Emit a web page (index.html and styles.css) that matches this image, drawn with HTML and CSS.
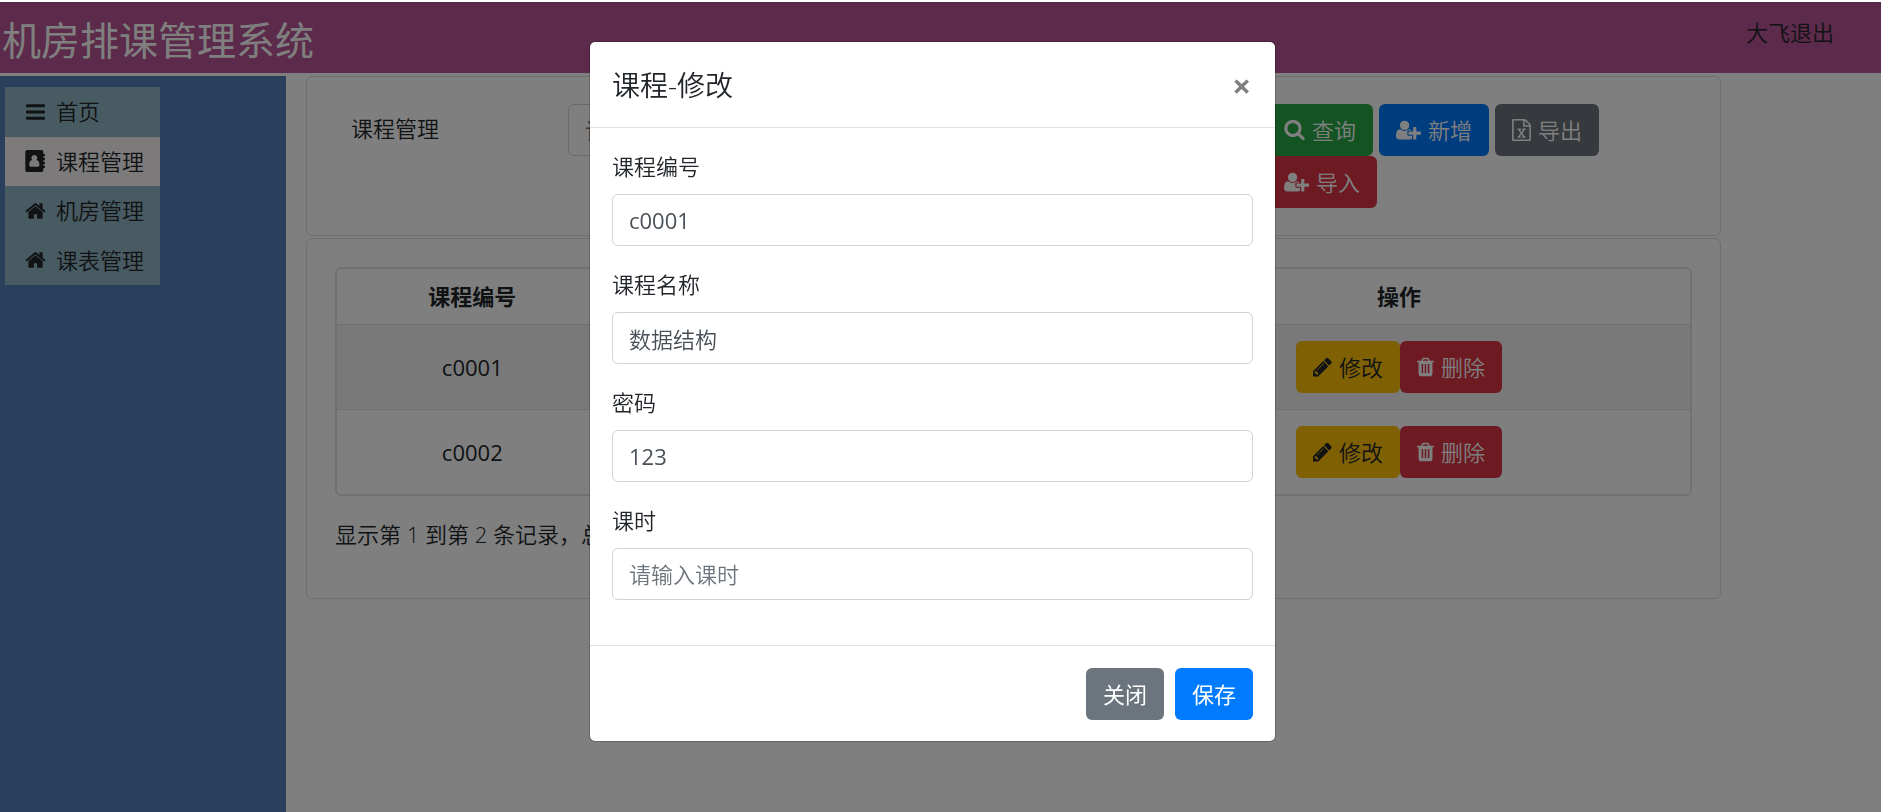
FILE: index.html
```
<!DOCTYPE html>
<html lang="zh-CN">
  <head>
    <meta charset="UTF-8" />
    <meta name="viewport" content="width=device-width, initial-scale=1.0" />
    <title>机房排课管理系统</title>
    <link rel="stylesheet" href="styles.css">
  </head>
  <body>
    <!-- 图标 -->
    <svg class="sprite" aria-hidden="true">
      <symbol id="i-bars" viewBox="96 0 1600 1792">
        <path d="M1664 1344v128q0 26-19 45t-45 19h-1408q-26 0-45-19t-19-45v-128q0-26 19-45t45-19h1408q26 0 45 19t19 45zm0-512v128q0 26-19 45t-45 19h-1408q-26 0-45-19t-19-45v-128q0-26 19-45t45-19h1408q26 0 45 19t19 45zm0-512v128q0 26-19 45t-45 19h-1408q-26 0-45-19t-19-45v-128q0-26 19-45t45-19h1408q26 0 45 19t19 45z" />
      </symbol>
      <symbol id="i-book" viewBox="64 0 1664 1792">
        <path fill-rule="evenodd" d="M224 0h1152q66 0 113 47t47 113v160h96q32 0 32 32v128q0 32-32 32h-96v128h96q32 0 32 32v128q0 32-32 32h-96v128h96q32 0 32 32v128q0 32-32 32h-96v128h96q32 0 32 32v128q0 32-32 32h-96v160q0 66-47 113t-113 47h-1152q-66 0-113-47t-47-113v-1472q0-66 47-113t113-47zM800 400a240 240 0 0 0-170 410q-250 50-250 420q0 130 120 130h600q120 0 120-130q0-370-250-420a240 240 0 0 0-170-410z" />
      </symbol>
      <symbol id="i-home" viewBox="64 0 1664 1792">
        <path d="M1472 992v480q0 26-19 45t-45 19h-384v-384h-256v384h-384q-26 0-45-19t-19-45v-480q0-1 .5-3t.5-3l575-474 575 474q1 2 1 6zm223-69l-62 74q-8 9-21 11h-3q-13 0-21-7l-692-577-692 577q-12 8-24 7-13-2-21-11l-62-74q-8-10-7-23.5t11-21.5l719-599q32-26 76-26t76 26l244 204v-195q0-14 9-23t23-9h192q14 0 23 9t9 23v408l219 182q10 8 11 21.5t-7 23.5z" />
      </symbol>
      <symbol id="i-search" viewBox="64 64 1664 1792">
        <path d="M1216 832q0-185-131.500-316.500t-316.500-131.500-316.500 131.500-131.500 316.500 131.500 316.500 316.500 131.500 316.500-131.500 131.500-316.500zm512 832q0 52-38 90t-90 38q-54 0-90-38l-343-342q-179 124-399 124-143 0-273.500-55.500t-225-150-150-225-55.500-273.500 55.500-273.500 150-225 225-150 273.500-55.500 273.500 55.500 225 150 150 225 55.500 273.500q0 220-124 399l343 343q37 37 37 90z" />
      </symbol>
      <symbol id="i-user-plus" viewBox="0 0 2048 1792">
        <path d="M704 896q-159 0-271.500-112.500t-112.500-271.500 112.500-271.500 271.500-112.500 271.500 112.500 112.500 271.500-112.500 271.500-271.500 112.500zm960 128h352q13 0 22.500 9.500t9.500 22.500v192q0 13-9.500 22.500t-22.500 9.500h-352v352q0 13-9.500 22.500t-22.500 9.500h-192q-13 0-22.500-9.500t-9.500-22.500v-352h-352q-13 0-22.500-9.500t-9.500-22.500v-192q0-13 9.500-22.500t22.500-9.500h352v-352q0-13 9.500-22.500t22.500-9.500h192q13 0 22.500 9.500t9.500 22.500v352zm-736 224q0 52 38 90t90 38h256v238q-68 50-171 50h-874q-121 0-194-69t-73-190q0-53 3.500-103.500t14-109 26.500-108.500 43-97.500 62-81 85.500-53.500 111.500-20q19 0 39 17 79 61 154.500 91.500t164.500 30.500 164.500-30.500 154.500-91.500q20-17 39-17 132 0 217 96h-223q-52 0-90 38t-38 90v192z" />
      </symbol>
      <symbol id="i-excel" viewBox="128 0 1536 1792">
        <path d="M1596 380q28 28 48 76t20 88v1152q0 40-28 68t-68 28h-1344q-40 0-68-28t-28-68v-1600q0-40 28-68t68-28h896q40 0 88 20t76 48zm-444-244v376h376q-10-29-22-41l-313-313q-12-12-41-22zm384 1528v-1024h-416q-40 0-68-28t-28-68v-416h-768v1536h1280zm-979-234v106h281v-106h-75l103-161q5-7 10-16.500t7.500-13.500 3.500-4h2q1 4 5 10 2 4 4.500 7.500t6 8 6.500 8.500l107 161h-76v106h291v-106h-68l-192-273 195-282h67v-107h-279v107h74l-103 159q-4 7-10 16.500t-9 13.500l-2 3h-2q-1-4-5-10-6-11-17-23l-106-159h76v-107h-290v107h68l189 272-194 283h-68z" />
      </symbol>
      <symbol id="i-pencil" viewBox="128 0 1536 1792">
        <path d="M491 1536l91-91-235-235-91 91v107h128v128h107zm523-928q0-22-22-22-10 0-17 7l-542 542q-7 7-7 17 0 22 22 22 10 0 17-7l542-542q7-7 7-17zm-54-192l416 416-832 832h-416v-416zm683 96q0 53-37 90l-166 166-416-416 166-165q36-38 90-38 53 0 91 38l235 234q37 39 37 91z" />
      </symbol>
      <symbol id="i-trash" viewBox="192 0 1408 1792">
        <path d="M704 1376v-704q0-14-9-23t-23-9h-64q-14 0-23 9t-9 23v704q0 14 9 23t23 9h64q14 0 23-9t9-23zm256 0v-704q0-14-9-23t-23-9h-64q-14 0-23 9t-9 23v704q0 14 9 23t23 9h64q14 0 23-9t9-23zm256 0v-704q0-14-9-23t-23-9h-64q-14 0-23 9t-9 23v704q0 14 9 23t23 9h64q14 0 23-9t9-23zm-544-992h448l-48-117q-7-9-17-11h-317q-10 2-17 11zm928 32v64q0 14-9 23t-23 9h-96v948q0 83-47 143.500t-113 60.500h-832q-66 0-113-58.500t-47-141.500v-952h-96q-14 0-23-9t-9-23v-64q0-14 9-23t23-9h309l70-167q15-37 54-63t79-26h320q40 0 79 26t54 63l70 167h309q14 0 23 9t9 23z" />
      </symbol>
    </svg>

    <div class="page">
      <header class="header">
        <h1>机房排课管理系统</h1>
        <div class="user">大飞<a href="#">退出</a></div>
      </header>

      <div class="content">
        <!-- 左侧菜单 -->
        <aside class="sidebar">
          <nav class="menu">
            <a href="#"><svg class="icon"><use href="#i-bars" /></svg>首页</a>
            <a href="#" class="active"><svg class="icon"><use href="#i-book" /></svg>课程管理</a>
            <a href="#"><svg class="icon"><use href="#i-home" /></svg>机房管理</a>
            <a href="#"><svg class="icon"><use href="#i-home" /></svg>课表管理</a>
          </nav>
        </aside>

        <main class="main">
          <!-- 查询条件 -->
          <form class="card search">
            <label for="keyword">课程管理</label>
            <input type="text" class="form-control" id="keyword" placeholder="请输入课程名称" />
            <div class="search-buttons">
              <button type="button" class="btn btn-success"><svg class="icon"><use href="#i-search" /></svg>查询</button>
              <button type="button" class="btn btn-primary"><svg class="icon icon-user"><use href="#i-user-plus" /></svg>新增</button>
              <button type="button" class="btn btn-secondary"><svg class="icon icon-file"><use href="#i-excel" /></svg>导出</button>
              <button type="button" class="btn btn-danger"><svg class="icon icon-user"><use href="#i-user-plus" /></svg>导入</button>
            </div>
          </form>

          <!-- 课程列表 -->
          <section class="card list">
            <table class="table">
              <thead>
                <tr>
                  <th class="col-id">课程编号</th>
                  <th>课程名称</th>
                  <th class="col-action">操作</th>
                </tr>
              </thead>
              <tbody>
                <tr>
                  <td>c0001</td>
                  <td>数据结构</td>
                  <td>
                    <div class="actions">
                      <button type="button" class="btn btn-warning"><svg class="icon icon-file"><use href="#i-pencil" /></svg>修改</button>
                      <button type="button" class="btn btn-danger"><svg class="icon icon-trash"><use href="#i-trash" /></svg>删除</button>
                    </div>
                  </td>
                </tr>
                <tr>
                  <td>c0002</td>
                  <td>操作系统</td>
                  <td>
                    <div class="actions">
                      <button type="button" class="btn btn-warning"><svg class="icon icon-file"><use href="#i-pencil" /></svg>修改</button>
                      <button type="button" class="btn btn-danger"><svg class="icon icon-trash"><use href="#i-trash" /></svg>删除</button>
                    </div>
                  </td>
                </tr>
              </tbody>
            </table>
            <p class="page-info">显示第 1 到第 2 条记录，总共 2 条记录</p>
          </section>
        </main>
      </div>
    </div>

    <!-- 修改课程弹窗 -->
    <div class="backdrop">
      <form class="modal" role="dialog" aria-labelledby="modal-title">
        <div class="modal-header">
          <h2 id="modal-title">课程-修改</h2>
          <button type="button" class="close" aria-label="关闭">×</button>
        </div>
        <div class="modal-body">
          <div class="form-group">
            <label for="course-id">课程编号</label>
            <input type="text" class="form-control code" id="course-id" value="c0001" />
          </div>
          <div class="form-group">
            <label for="course-name">课程名称</label>
            <input type="text" class="form-control" id="course-name" value="数据结构" />
          </div>
          <div class="form-group">
            <label for="password">密码</label>
            <input type="text" class="form-control code" id="password" value="123" />
          </div>
          <div class="form-group">
            <label for="hours">课时</label>
            <input type="text" class="form-control" id="hours" placeholder="请输入课时" />
          </div>
        </div>
        <div class="modal-footer">
          <button type="button" class="btn btn-secondary">关闭</button>
          <button type="button" class="btn btn-primary">保存</button>
        </div>
      </form>
    </div>
  </body>
</html>
```
FILE: styles.css
```
* {
  box-sizing: border-box;
}

body {
  margin: 0;
  font-family: "Open Sans", "Noto Sans CJK SC", sans-serif;
  font-size: 22px;
  font-weight: 350;
  line-height: 33px;
  color: #212529;
  background: #fff;
}

button,
input {
  font: inherit;
}

h1,
h2,
p {
  margin: 0;
  font-weight: 350;
}

a {
  color: inherit;
  text-decoration: none;
}

.sprite {
  display: none;
}

.page {
  display: flex;
  flex-direction: column;
  min-height: 100vh;
  padding-top: 2px;
}

/* 顶部 */
.header {
  display: flex;
  justify-content: space-between;
  align-items: flex-start;
  padding: 14px 47px 9px 2px;
  margin-bottom: 3px;
  background: #b85494;
}

.header h1 {
  font-size: 39px;
  font-weight: 400;
  line-height: 48px;
  color: #fff;
}

.content {
  display: flex;
  flex: 1;
}

/* 左侧菜单 */
.sidebar {
  width: 286px;
  padding: 11px 5px;
  background: #527eb8;
}

.menu {
  display: inline-flex;
  flex-direction: column;
  height: 198px;
  background: #90b4c4;
}

.menu a {
  display: flex;
  flex: 1;
  align-items: center;
  gap: 10px;
  padding: 0 16px 0 20px;
}

.menu a.active {
  background: #f8f4f4;
}

.icon {
  width: 21px;
  height: 22px;
  flex: none;
  fill: currentColor;
}

.icon-user {
  width: 25px;
}

.icon-file {
  width: 19px;
}

.icon-trash {
  width: 17px;
}

/* 右侧内容 */
.main {
  display: flex;
  flex: 1;
  flex-direction: column;
  gap: 2px;
  padding: 0 160px 0 20px;
}

.card {
  padding: 27px 28px;
  border: 1px solid #dfdfdf;
  border-radius: 6px;
}

.search {
  display: flex;
  align-items: flex-start;
}

.search label {
  width: 233px;
  padding: 8px 16px;
}

.search .form-control {
  width: 424px;
  margin-right: auto;
}

.search-buttons {
  display: flex;
  flex-wrap: wrap;
  column-gap: 6px;
  width: 425px;
}

.list {
  padding: 28px 28px 47px;
}

.btn {
  display: inline-flex;
  align-items: center;
  gap: 7px;
  padding: 8px 16px;
  font-weight: 350;
  line-height: 34px;
  border: 1px solid transparent;
  border-radius: 6px;
  color: #fff;
  cursor: pointer;
}

.btn-success {
  background: #28a745;
}

.btn-primary {
  background: #007bff;
}

.btn-secondary {
  background: #6c757d;
}

.btn-danger {
  background: #dc3545;
}

.btn-warning {
  background: #ffc107;
  color: #212529;
}

.form-control {
  display: block;
  width: 100%;
  height: 52px;
  padding: 8px 16px;
  border: 1px solid #ced4da;
  border-radius: 6px;
  color: #495057;
  background: #fff;
}

.form-control::placeholder {
  color: #6c757d;
  opacity: 1;
}

.form-control.code {
  font-weight: 400;
}

/* 表格 */
.table {
  width: 100%;
  table-layout: fixed;
  border: 2px solid #dee2e6;
  border-radius: 6px;
  border-spacing: 0;
  text-align: center;
}

.table th {
  padding: 11px;
  font-weight: 700;
}

.table td {
  padding: 16px;
  font-weight: 400;
  border-top: 1px solid #dee2e6;
}

.table tbody tr:first-child {
  background: #f2f2f2;
}

.col-id {
  width: 20%;
}

.col-action {
  width: 43%;
}

.actions {
  display: flex;
  justify-content: center;
}

.page-info {
  padding-top: 22px;
}

/* 弹窗 */
.backdrop {
  position: fixed;
  inset: 2px 0 0;
  display: flex;
  justify-content: center;
  align-items: flex-start;
  padding: 39px 16px 39px 0;
  background: rgba(0, 0, 0, 0.5);
}

.modal {
  width: 687px;
  border-radius: 6px;
  border: 1px solid rgba(0, 0, 0, 0.2);
  background: #fff;
  background-clip: padding-box;
}

.modal-header {
  display: flex;
  justify-content: space-between;
  align-items: center;
  padding: 22px 22px 21px;
  border-bottom: 1px solid #dee2e6;
}

.modal-header h2 {
  font-size: 28px;
  line-height: 42px;
}

.close {
  padding: 0 2px;
  border: 0;
  background: none;
  font-size: 33px;
  font-weight: 700;
  color: #7f7f7f;
  cursor: pointer;
}

.modal-body {
  padding: 22px 22px 23px;
}

.form-group {
  margin-bottom: 22px;
}

.form-group label {
  display: block;
  margin-bottom: 11px;
}

.modal-footer {
  display: flex;
  justify-content: flex-end;
  gap: 11px;
  padding: 22px 22px 21px;
  border-top: 1px solid #dee2e6;
}

.modal-footer .btn {
  font-weight: 400;
}
```
